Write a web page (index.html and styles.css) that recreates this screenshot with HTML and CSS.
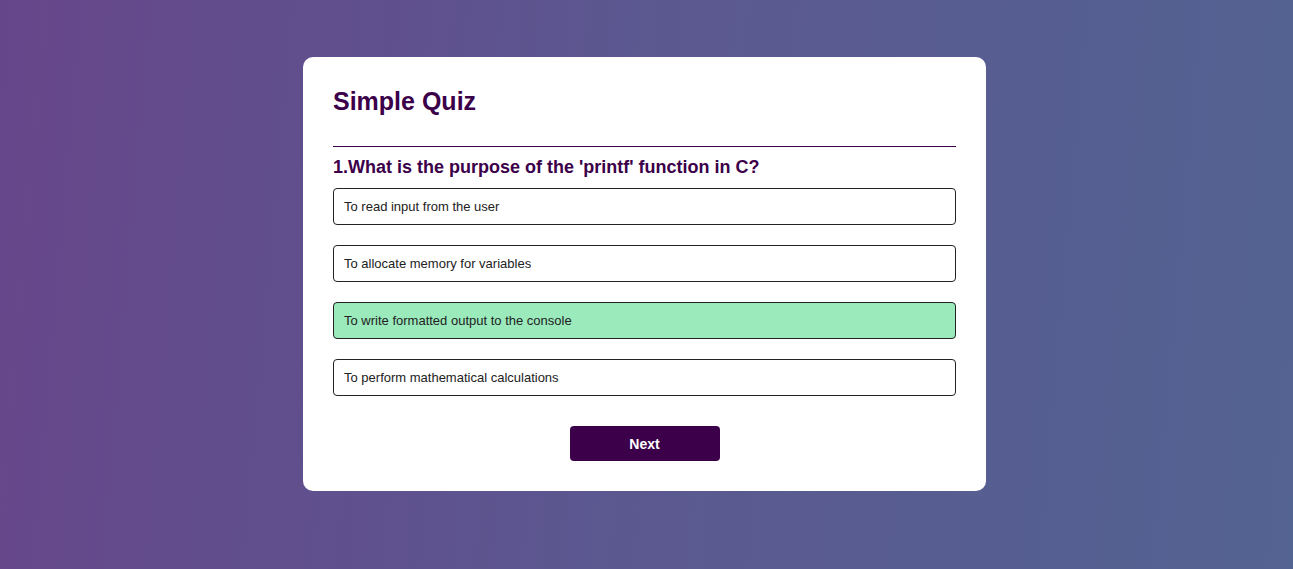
FILE: index.html
```html
<!DOCTYPE html>
<html lang="en">
<head>
<meta charset="UTF-8">
<title>Simple Quiz</title>
<link rel="stylesheet" href="styles.css">
</head>
<body>
  <div class="app">
    <h1 class="title">Simple Quiz</h1>
    <div class="quiz">
      <h2 class="question">1.What is the purpose of the 'printf' function in C?</h2>
      <div class="answers">
        <button class="btn">To read input from the user</button>
        <button class="btn">To allocate memory for variables</button>
        <button class="btn correct">To write formatted output to the console</button>
        <button class="btn">To perform mathematical calculations</button>
      </div>
      <button class="next">Next</button>
    </div>
  </div>
</body>
</html>
```

FILE: styles.css
```css
* {
  box-sizing: border-box;
  margin: 0;
  padding: 0;
}

html, body {
  height: 100%;
}

body {
  font-family: "Liberation Sans", Arial, sans-serif;
  background: linear-gradient(95deg, #66468a 0%, #5b5890 50%, #536392 100%);
  overflow: hidden;
}

.app {
  background: #fff;
  width: 683px;
  margin: 57px auto 0;
  position: relative;
  left: -2px;
  border-radius: 10px;
  padding: 30px;
}

.title {
  font-size: 25px;
  font-weight: 700;
  color: #3b0049;
  line-height: normal;
  padding-bottom: 30px;
  border-bottom: 1px solid #3b0049;
}

.quiz {
  padding-top: 10px;
}

.question {
  font-size: 18px;
  font-weight: 700;
  color: #3b0049;
  line-height: normal;
}

.answers {
  display: flex;
  flex-direction: column;
  gap: 20px;
  margin-top: 10px;
}

.btn {
  display: block;
  width: 100%;
  text-align: left;
  background: #fff;
  color: #222;
  font-family: "Liberation Sans", Arial, sans-serif;
  font-size: 13px;
  line-height: 15px;
  padding: 10px;
  border: 1px solid #222;
  border-radius: 4px;
  cursor: pointer;
}

.btn.correct {
  background: #9aeabc;
}

.next {
  display: block;
  width: 150px;
  height: 35px;
  margin: 30px auto 0;
  background: #3b0049;
  color: #fff;
  border: 0;
  border-radius: 4px;
  font-family: "Liberation Sans", Arial, sans-serif;
  font-size: 14px;
  font-weight: 700;
  cursor: pointer;
}
```
